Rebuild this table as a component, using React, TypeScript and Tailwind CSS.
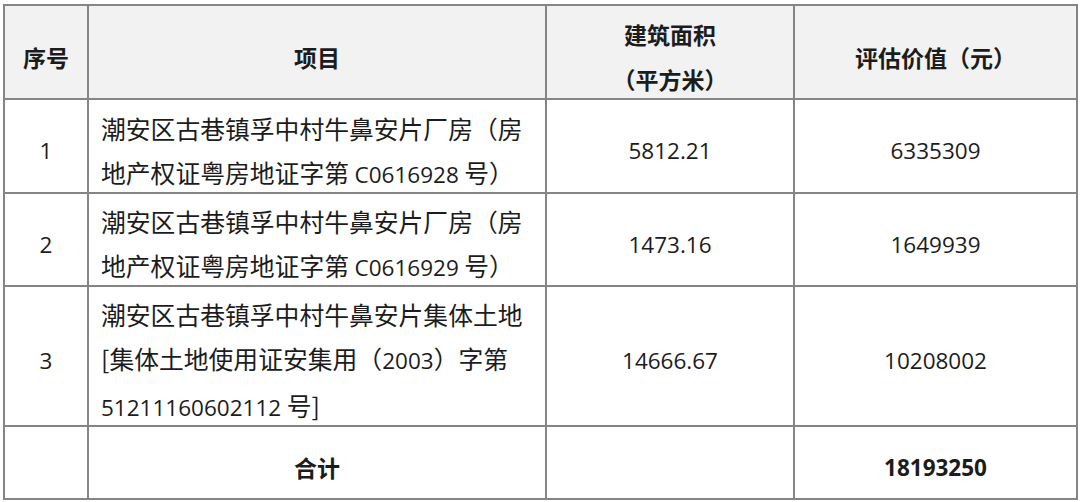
import React from 'react';

const cjk = '"Noto Sans CJK SC", sans-serif';
const latin = '"Open Sans", "Noto Sans CJK SC", sans-serif';

type Row = { no: string; item: React.ReactNode; area: string; value: string; h: string };

const Num: React.FC<{ children: React.ReactNode }> = ({ children }) => (
  <span className="text-[22.5px]" style={{ fontFamily: latin }}>
    {children}
  </span>
);

// cell content sits a few px below the middle, like the Word original
const Cell: React.FC<{ className?: string; head?: boolean; children?: React.ReactNode }> = ({ className = '', head, children }) => {
  const Tag = head ? 'th' : 'td';
  return (
    <Tag className={`border-2 border-[#858585] ${className}`}>
      <div className="translate-y-[5px]">{children}</div>
    </Tag>
  );
};

const rows: Row[] = [
  {
    no: '1',
    item: (
      <>
        潮安区古巷镇孚中村牛鼻安片厂房（房
        <br />
        地产权证粤房地证字第 <Num>C0616928</Num> 号）
      </>
    ),
    area: '5812.21',
    value: '6335309',
    h: 'h-[94px]',
  },
  {
    no: '2',
    item: (
      <>
        潮安区古巷镇孚中村牛鼻安片厂房（房
        <br />
        地产权证粤房地证字第 <Num>C0616929</Num> 号）
      </>
    ),
    area: '1473.16',
    value: '1649939',
    h: 'h-[93px]',
  },
  {
    no: '3',
    item: (
      <>
        潮安区古巷镇孚中村牛鼻安片集体土地
        <br />
        [集体土地使用证安集用（<Num>2003</Num>）字第
        <br />
        <Num>51211160602112</Num> 号]
      </>
    ),
    area: '14666.67',
    value: '10208002',
    h: 'h-[140px]',
  },
];

export default function App() {
  return (
    <div className="w-[1080px] h-[502px] bg-white pt-[4px] pl-[3px] text-[#1c1c1c]" style={{ fontFamily: cjk }}>
      <table className="border-collapse table-fixed w-[1073px]">
        <colgroup>
          <col className="w-[84px]" />
          <col className="w-[458px]" />
          <col className="w-[248px]" />
          <col className="w-[283px]" />
        </colgroup>
        <thead>
          <tr className="h-[94px] bg-[#f2f2f2] font-bold text-[23px] leading-[45px]">
            <Cell head className="text-center">序号</Cell>
            <Cell head className="text-center">项目</Cell>
            <Cell head className="text-center">
              建筑面积
              <br />
              （平方米）
            </Cell>
            <Cell head className="text-center">评估价值（元）</Cell>
          </tr>
        </thead>
        <tbody>
          {rows.map((r) => (
            <tr key={r.no} className={r.h}>
              <Cell className="text-center">
                <Num>{r.no}</Num>
              </Cell>
              <Cell className="pl-[12px] text-[24.8px] leading-[44px] whitespace-nowrap">{r.item}</Cell>
              <Cell className="text-center">
                <Num>{r.area}</Num>
              </Cell>
              <Cell className="text-center">
                <Num>{r.value}</Num>
              </Cell>
            </tr>
          ))}
          <tr className="h-[73px] font-bold">
            <Cell />
            <Cell className="text-center text-[23px]">合计</Cell>
            <Cell />
            <Cell className="text-center">
              <Num>18193250</Num>
            </Cell>
          </tr>
        </tbody>
      </table>
    </div>
  );
}
